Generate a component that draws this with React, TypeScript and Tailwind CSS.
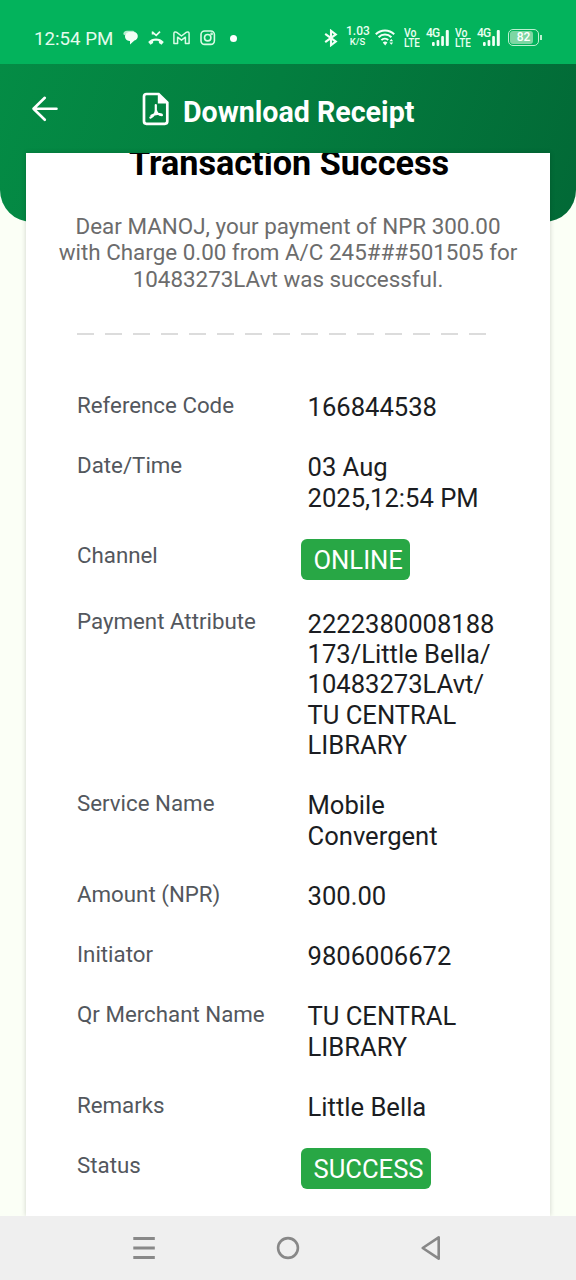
import type { ReactNode } from 'react';

type Row = {
  label: string;
  lines: string[];
  badge?: boolean;
};

const rows: Row[] = [
  { label: 'Reference Code', lines: ['166844538'] },
  { label: 'Date/Time', lines: ['03 Aug', '2025,12:54 PM'] },
  { label: 'Channel', lines: ['ONLINE'], badge: true },
  { label: 'Payment Attribute', lines: ['2222380008188', '173/Little Bella/', '10483273LAvt/', 'TU CENTRAL', 'LIBRARY'] },
  { label: 'Service Name', lines: ['Mobile', 'Convergent'] },
  { label: 'Amount (NPR)', lines: ['300.00'] },
  { label: 'Initiator', lines: ['9806006672'] },
  { label: 'Qr Merchant Name', lines: ['TU CENTRAL', 'LIBRARY'] },
  { label: 'Remarks', lines: ['Little Bella'] },
  { label: 'Status', lines: ['SUCCESS'], badge: true },
];

const ChatIcon = () => (
  <svg width="15" height="15" viewBox="0 0 15 15" fill="#f2fff6">
    <path d="M4 .8h5.2c1.4 0 2.300 .6 2.800 1.600H5.600C3.600 2.400 2.300 3.800 2.200 5.600L.3 4.200C.3 2.200 1.800 .8 4 .8z" opacity="0.75" />
    <path d="M6 1.900h4.800c2.400 0 4 1.800 4 4.100S13.300 10.200 11.400 10.500L7 14.400V10.900C3.800 11.200 2 8.800 2 6.300 2 3.700 3.600 1.900 6 1.900z" />
  </svg>
);

const MissedCallIcon = () => (
  <svg width="16" height="14" viewBox="0 0 16 14" fill="none">
    <path d="M4.600 .4v3.200M4.200 .8l4 3.600L12 .6" stroke="#e9fff0" strokeWidth="1.700" />
    <path d="M.2 11C4.400 6.400 11.600 6.400 15.800 11L13.500 13.800 10.900 12V10.200C9 9.600 7 9.600 5.100 10.200V12L2.500 13.800z" fill="#e9fff0" />
  </svg>
);

const GmailIcon = () => (
  <svg width="17" height="14" viewBox="0 0 17 14" fill="none" stroke="#d9fbe5" strokeWidth="1.500" strokeLinejoin="round">
    <path d="M.9 2.600C.9 .9 2.600 .5 3.800 1.400L8.500 5l4.700-3.600c1.200-.9 2.900-.5 2.900 1.200v9.900h-3.700V6.200L8.500 9.200 4.600 6.200v6.300H.9z" />
  </svg>
);

const InstagramIcon = () => (
  <svg width="16" height="16" viewBox="0 0 16 16" fill="none" stroke="#d9fbe5" strokeWidth="1.600">
    <rect x="1" y="1" width="13.400" height="13.400" rx="3.600" />
    <circle cx="7.700" cy="7.700" r="3.200" />
    <circle cx="11.600" cy="3.900" r=".5" fill="#d9fbe5" />
  </svg>
);

const BluetoothIcon = () => (
  <svg width="14" height="18" viewBox="0 0 14 18" fill="none" stroke="#f2fff6" strokeWidth="2.100">
    <path d="M1.200 4.800l10.600 7.800L7 16.200V1.800l4.800 3.600-10.600 7.800" />
  </svg>
);

const WifiIcon = () => (
  <svg width="20" height="17" viewBox="0 0 20 17" fill="none" stroke="#f2fff6" strokeWidth="2">
    <path d="M.8 5.300C6 .1 14 .1 19.200 5.300" />
    <path d="M3.600 8.200C7.200 4.600 12.800 4.600 16.400 8.200" />
    <path d="M6.400 11.100C8.400 9.200 11.400 9.200 13.200 11" />
    <path d="M10.200 16.400l-2.400-3c1.200-1.200 3.400-1.200 4.600 0z" fill="#f2fff6" stroke="none" />
    <path d="M14.400 12.200l1.900-2.300 1.900 2.300zM14.400 13.400l1.900 2.400 1.900-2.400z" fill="#f2fff6" stroke="none" />
  </svg>
);

const VolteSignal = () => (
  <div className="flex items-start">
    <div className="w-[17px] text-[12.5px] font-medium leading-[9.5px] text-[#e9fff0]">
      <div className="origin-left scale-x-[0.84]">Vo</div>
      <div className="origin-left scale-x-[0.8]">LTE</div>
    </div>
    <div className="ml-[5px] grid h-[19px] w-[24px]">
      <span className="col-start-1 row-start-1 text-[12px] font-medium leading-[10px] tracking-[-0.8px] text-[#e9fff0]">4G</span>
      <svg className="col-start-1 row-start-1 ml-[6px] mt-[1px]" width="18" height="18" viewBox="0 0 18 18" fill="#f2fff6">
        <rect x="0" y="13" width="2.700" height="4" rx="1" />
        <rect x="4.600" y="11" width="2.700" height="6" rx="1" />
        <rect x="9.200" y="7" width="2.700" height="10" rx="1" />
        <rect x="13.800" y="1" width="3" height="16" rx="1" />
      </svg>
    </div>
  </div>
);

const StatusBar = () => (
  <div className="flex h-16 shrink-0 items-center bg-[#03b35c] pt-[11px] pl-[34px]">
    <span className="mt-[2px] w-[80px] whitespace-nowrap text-[18.7px] leading-6 text-[#e4fbed]">12:54 PM</span>
    <div className="ml-[9px] flex items-center">
      <ChatIcon />
      <div className="ml-[10px]"><MissedCallIcon /></div>
      <div className="ml-[9px]"><GmailIcon /></div>
      <div className="ml-[10px]"><InstagramIcon /></div>
      <span className="ml-[14px] mt-[1px] h-[7px] w-[7px] rounded-full bg-white" />
    </div>
    <div className="ml-[87px] flex items-center">
      <BluetoothIcon />
      <div className="ml-[8px] -mt-[3px] w-[23px] text-center font-medium text-[#e9fff0]">
        <div className="text-[12px] leading-[11px]">1.03</div>
        <div className="text-[9.5px] leading-[9px]">K/S</div>
      </div>
      <div className="ml-[6px]"><WifiIcon /></div>
      <div className="ml-[9px] flex gap-[5px]">
        <VolteSignal />
        <VolteSignal />
      </div>
      <div className="ml-[7px] flex items-center">
        <div className="h-[17px] w-[31px] rounded-[5px] border border-[#bdf0d0] p-[1px]">
          <div className="h-full w-[23px] rounded-[3px] bg-[#7dd6a3] pl-[4px] text-center text-[12px] font-medium leading-[13px] text-white">82</div>
        </div>
        <span className="ml-[1px] h-[5px] w-[1.5px] bg-[#bdf0d0]" />
      </div>
    </div>
  </div>
);

const PdfIcon = () => (
  <svg width="28" height="34" viewBox="0 0 28 34" fill="none">
    <path d="M4.500 2h12.100L25.300 10.600v18.700a2.500 2.500 0 0 1-2.500 2.500H4.500a2.500 2.500 0 0 1-2.500-2.500V4.500A2.500 2.500 0 0 1 4.500 2z" stroke="#fff" strokeWidth="2.700" />
    <path d="M15.800 2v9.400h9.400z" fill="#fff" />
    <path d="M13.800 13v5c0 3-2.200 6.400-5.400 7.600M13.800 18c.8 3.400 3 5 6.100 5.200M9.400 23.700c3-1.800 6.400-2.400 10.200-1.200" stroke="#fff" strokeWidth="2.200" strokeLinecap="round" strokeLinejoin="round" />
  </svg>
);

const Header = () => (
  <div className="flex h-[158px] shrink-0 items-start rounded-b-[32px] bg-[linear-gradient(110deg,#048c45_0%,#037e3f_45%,#026936_100%)]">
    <svg className="mt-[31px] ml-[31px]" width="28" height="28" viewBox="0 0 28 28" fill="none" stroke="#fff" strokeWidth="2.600" strokeLinecap="round" strokeLinejoin="round">
      <path d="M25.500 13.800H2.500M13.800 2.800L2.500 13.800l11.300 11" />
    </svg>
    <div className="ml-[83px] mt-[28px] flex items-start">
      <PdfIcon />
      <h1 className="ml-[13px] mt-[1px] whitespace-nowrap text-[28.6px] font-bold leading-[38px] text-white">Download Receipt</h1>
    </div>
  </div>
);

const Badge = ({ children }: { children: ReactNode }) => (
  <div className="-mt-[4px] -ml-[7px] -mb-[1px] h-[41px] w-fit rounded-[6px] bg-[#28a745] pr-[7px] pl-[13px] leading-[43px] text-white">
    {children}
  </div>
);

const DetailRow = ({ label, lines, badge }: Row) => (
  <div className="grid grid-cols-[230.5px_1fr]">
    <div className="-mt-[0.4px] text-[22.3px] leading-[26.4px] text-[#53575d]">{label}</div>
    <div className="whitespace-nowrap text-[25.6px] leading-[30.4px] text-[#1b1d22]">
      {badge ? <Badge>{lines[0]}</Badge> : lines.map((line) => <div key={line}>{line}</div>)}
    </div>
  </div>
);

const NavBar = () => (
  <div className="flex h-16 shrink-0 items-center justify-between bg-[#efefef] px-[132px]">
    <svg width="24" height="24" viewBox="0 0 24 24" stroke="#888" strokeWidth="3">
      <path d="M1.300 2.500h21.500M1.300 12h21.500M1.300 21.500h21.500" />
    </svg>
    <svg width="24" height="24" viewBox="0 0 24 24" fill="none" stroke="#888" strokeWidth="2.600">
      <circle cx="12" cy="12" r="9.900" />
    </svg>
    <svg width="24" height="26" viewBox="0 0 24 26" fill="none" stroke="#888" strokeWidth="2.600" strokeLinejoin="round">
      <path d="M18.700 2.300v21.400L2.700 13z" />
    </svg>
  </div>
);

export default function App() {
  return (
    <div className="flex h-[1280px] w-[576px] flex-col overflow-hidden bg-[#fbfff6] font-[Roboto,sans-serif]">
      <StatusBar />
      <Header />
      {/* Receipt slides up over the green header */}
      <main className="mx-[26px] -mt-[69px] flex min-h-0 flex-1 flex-col overflow-hidden bg-white shadow-[0_0_5px_rgba(0,0,0,0.18)]">
        <h2 className="-mt-[9px] pl-[2px] text-center text-[34.2px] font-bold leading-[38px] text-black">Transaction Success</h2>
        <p className="mt-[31px] whitespace-nowrap text-center text-[22.4px] leading-[26.4px] text-[#6c6c6c]">
          Dear MANOJ, your payment of NPR 300.00
          <br />
          with Charge 0.00 from A/C 245###501505 for
          <br />
          10483273LAvt was successful.
        </p>
        <div className="mt-[41px] ml-[51px] h-[2px] w-[412px] shrink-0 bg-[repeating-linear-gradient(90deg,#dcdcdc_0_17px,transparent_17px_28px)]" />
        <div className="mt-[56.8px] flex flex-col gap-[29.8px] pl-[51px]">
          {rows.map((row) => (
            <DetailRow key={row.label} {...row} />
          ))}
        </div>
      </main>
      <NavBar />
    </div>
  );
}
